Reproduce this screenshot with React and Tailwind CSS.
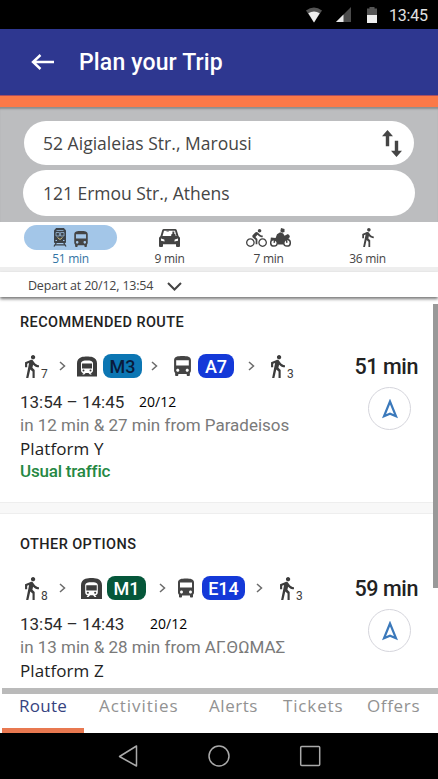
import React, { useState } from "react";
import { MdDirectionsBike, MdDirectionsBus, MdDirectionsWalk, MdSubway } from "react-icons/md";

const MODES = [
  { id: "transit", time: "51 min" },
  { id: "car", time: "9 min" },
  { id: "bike", time: "7 min" },
  { id: "walk", time: "36 min" },
];

const TABS = [
  { name: "Route", style: "ml-[19px] w-[80px] tracking-[0.25px]" },
  { name: "Activities", style: "w-[110px] tracking-[0.95px]" },
  { name: "Alerts", style: "w-[74px] tracking-[0.55px]" },
  { name: "Tickets", style: "w-[84px] tracking-[0.85px]" },
  { name: "Offers", style: "w-[60px] tracking-[0.65px]" },
];

const StatusBar = () => (
  <div className="flex h-[29px] shrink-0 items-center justify-end bg-black pr-[9px] text-[#e0e0e0]">
    <svg className="h-4 w-4" viewBox="0 0 16 16">
      <path d="M0 3.5Q8-2.5 16 3.5L8 15.5z" fill="#555" />
      <path d="M2.3 6.3Q8 2.6 13.7 6.3L8 15.5z" fill="#eee" />
    </svg>
    <svg className="ml-[14px] h-[15px] w-[15px]" viewBox="0 0 15 15">
      <path d="M15 0v15H0z" fill="#4b4b4b" />
      <path d="M7.5 7.5V15H0z" fill="#e8e8e8" />
    </svg>
    <svg className="ml-4 h-4 w-[10px]" viewBox="0 0 10 16">
      <path d="M2.5 0h5v1.5H10V16H0V1.5h2.5z" fill="#555" />
      <path d="M0 8h10v8H0z" fill="#eee" />
    </svg>
    <span className="ml-3 w-10 whitespace-nowrap pt-px text-[16px] leading-[29px] tracking-[-0.2px]">13:45</span>
  </div>
);

const TrainIcon = () => (
  <svg className="h-[19px] w-[14px] text-[#3c4248]" viewBox="0 0 14 19" fill="none" stroke="currentColor">
    <path d="M3 .5h8l1.500 2v12H1.500v-12z" fill="currentColor" />
    <path d="M3.500 2.500h7M3 4.500h3.400v3.500H3zM7.600 4.500H11v3.500H7.600z" stroke="#a3c6e8" strokeWidth=".7" />
    <path d="M4.500 9.500L7 11.500l2.500-2" stroke="#d7c481" />
    <path d="M2.500 12.500h1.500M10 12.500h1.500" stroke="#a3c6e8" />
    <path d="M3.400 14.500L1 18.500M10.600 14.500l2.400 4M2 16.800h10" strokeWidth="1.300" />
  </svg>
);

const CarIcon = () => (
  <svg className="h-[18px] w-[21px]" viewBox="0 0 21 18">
    <path
      d="M4.800 0h11.400q1.200 0 1.600 1.300L19.500 7 21 8.700V17q0 1-1 1h-2q-1 0-1-1v-1.700H4V17q0 1-1 1H1q-1 0-1-1V8.700L1.500 7l1.700-5.700Q3.600 0 4.800 0z"
      fill="currentColor"
    />
    <path d="M5 1.700h11L17.500 7h-14z" fill="#fff" />
    <path d="M12.200 7V5.400l1.200-.6V2.600h1.900v2.200l1.300.7V7zM7.500 1.700h2.300v.8H7.500z" fill="currentColor" />
    <path d="M2 9.500l3.300.9.300 2L2 11.700zM19 9.500l-3.300.9-.3 2 3.600-.7z" fill="#fff" />
  </svg>
);

const MotorbikeIcon = () => (
  <svg className="h-[19px] w-[21px]" viewBox="0 0 21 19" fill="none" stroke="currentColor">
    <circle cx="4" cy="14.800" r="3.300" strokeWidth="1.500" />
    <circle cx="17" cy="14.800" r="3.300" strokeWidth="1.500" />
    <path d="M11 0l3.500 1v3l-2.500.8-1.700-1.600z" fill="currentColor" stroke="none" />
    <path
      d="M10.200 4.300l3 1.200 1.300 2.300 3.500-1.700 1.900 2-.8 2.400-3.600 1.200-2 4.800H8.200L6 13l-5.500-1.300.4-2.200 4.700.6L7 6.200z"
      fill="currentColor"
      stroke="none"
    />
    <path d="M15.500 9.500L17 14.800M5 12l-1 2.800" strokeWidth="1.500" />
  </svg>
);

const SwapIcon = () => (
  <svg className="h-[27px] w-5" viewBox="0 0 20 27" fill="currentColor">
    <path d="M5.500 0L11 6.200H7.200v10H3.800v-10H0z" />
    <path d="M14.500 27L9 20.800h3.800v-10h3.400v10H20z" />
  </svg>
);

const ModeIcons = ({ id }) => {
  if (id === "transit") {
    return (
      <>
        <TrainIcon />
        <MdDirectionsBus viewBox="4 2 16 19" className="mt-0.5 ml-[7px] h-4 w-[14px]" />
      </>
    );
  }
  if (id === "car") return <CarIcon />;
  if (id === "bike") {
    return (
      <>
        <MdDirectionsBike viewBox="0 1.5 24 20.5" className="h-[18px] w-[21px]" />
        <span className="ml-[3px]">
          <MotorbikeIcon />
        </span>
      </>
    );
  }
  return <MdDirectionsWalk viewBox="6 1.5 13 21.5" className="h-[19px] w-3" />;
};

const Chevron = ({ className }) => (
  <svg className={`h-[10px] w-[7px] shrink-0 text-[#6b6b6b] ${className}`} viewBox="0 0 7 10" fill="none" stroke="currentColor" strokeWidth="1.5">
    <path d="M1 1l4.500 4L1 9" />
  </svg>
);

const Walk = ({ count, className }) => (
  <div className={`flex h-[23px] shrink-0 items-end text-[#3c3c3c] ${className}`}>
    <MdDirectionsWalk viewBox="6 1.5 13 21.5" className="h-[23px] w-[14px]" />
    <span className="ml-[2px] w-2 text-[12px] leading-[8px]">{count}</span>
  </div>
);

const RouteOption = ({ heading, steps, total, times, date, info, platform, traffic }) => (
  <section className="flex px-[20px]">
    <div className="w-[330px] shrink-0">
      <h2 className="h-5 whitespace-nowrap text-[14.5px] font-medium leading-5 tracking-[0.42px] text-[#222]">{heading}</h2>
      <div className="mt-[21px] flex h-6 items-center">{steps}</div>
      <div className="mt-3 flex h-6 items-center whitespace-nowrap leading-6">
        <span className="w-[104px] text-[17px] text-[#2b2b2b]">{times}</span>
        {date}
      </div>
      <p className="h-[23px] whitespace-nowrap text-[17px] leading-[23px] text-[#7a7a7a]">{info}</p>
      <p className="h-[23px] whitespace-nowrap font-['Open_Sans',sans-serif] text-[17px] leading-[23px] tracking-[0.1px] text-[#222]">
        {platform}
      </p>
      {traffic && <p className="h-[23px] text-[17px] font-medium leading-[23px] tracking-[-0.2px] text-[#258843]">{traffic}</p>}
    </div>
    <div className="flex flex-1 flex-col items-end pt-[41px]">
      <div className="h-6 whitespace-nowrap pt-px text-[21.5px] font-medium leading-6 tracking-[-0.4px] text-[#222]">{total}</div>
      <button className="mt-[9px] mr-[7px] flex h-[43px] w-[43px] items-center justify-center rounded-full border border-[#d5d5dc]">
        <svg className="h-5 w-4" viewBox="0 0 16 20" fill="none" stroke="#3b79bb" strokeWidth="2.2">
          <path d="M8 2.500L2 17.300l6-2.500 6 2.500z" />
        </svg>
      </button>
    </div>
  </section>
);

const App = () => {
  const [mode, setMode] = useState("transit");
  const [tab, setTab] = useState("Route");

  return (
    <div className="flex h-[779px] w-[438px] flex-col overflow-hidden bg-white font-['Roboto',sans-serif]">
      <StatusBar />

      <header className="flex h-[66px] shrink-0 items-center bg-[#2e3790] text-white">
        <svg className="ml-[31px] h-4 w-[23px]" viewBox="0 0 23 16" fill="none" stroke="currentColor" strokeWidth="2.4">
          <path d="M9.500 1L2 8l7.500 7M2 8h21" />
        </svg>
        <h1 className="mt-[2px] ml-[25px] whitespace-nowrap text-[23px] font-medium leading-8 tracking-[0.15px]">Plan your Trip</h1>
      </header>
      <div className="h-[12px] shrink-0 border-t border-[#a94e62] bg-[#fb7948]" />

      {/* origin and destination */}
      <div className="flex h-[115px] shrink-0 flex-col bg-[#bcbdbf] pl-[23px] font-['Open_Sans',sans-serif] text-[17.5px] text-[#454545] shadow-[inset_0_3px_2px_-1px_#8d8d8d]">
        <div className="mt-[14px] ml-px flex h-11 w-[390px] items-center justify-between rounded-full bg-white pr-3 pl-[19px]">
          <span className="tracking-[0.02px]">52 Aigialeias Str., Marousi</span>
          <SwapIcon />
        </div>
        <div className="mt-[5px] flex h-[46px] w-[392px] items-center rounded-full bg-white pl-5">
          <span className="tracking-[-0.02px]">121 Ermou Str., Athens</span>
        </div>
      </div>

      {/* travel modes */}
      <div className="flex h-[45px] shrink-0 pt-[3px] pl-[21px] font-['Open_Sans',sans-serif]">
        {MODES.map((m) => (
          <button key={m.id} onClick={() => setMode(m.id)} className="flex w-[99px] flex-col items-center text-[#444]">
            <span className={`flex h-[26px] w-[93px] items-center justify-center rounded-full ${mode === m.id ? "bg-[#a3c6e8]" : ""}`}>
              <ModeIcons id={m.id} />
            </span>
            <span className={`text-[12px] leading-[17px] tracking-[-0.3px] ${mode === m.id ? "text-[#3374a4]" : ""}`}>{m.time}</span>
          </button>
        ))}
      </div>
      <div className="h-[5px] shrink-0 bg-[#eeeeee]" />

      <div className="z-10 flex h-[25px] shrink-0 items-center bg-white pt-1 pl-7 font-['Open_Sans',sans-serif] text-[12.5px] text-[#444] shadow-[0_2px_3px_#777]">
        <span className="w-[126px] whitespace-nowrap tracking-[-0.2px]">Depart at 20/12, 13:54</span>
        <svg className="ml-[13px] h-[9px] w-[15px]" viewBox="0 0 15 9" fill="none" stroke="currentColor" strokeWidth="2">
          <path d="M1 1l6.500 6.500L14 1" />
        </svg>
      </div>

      {/* route list */}
      <main className="relative h-[391px] shrink-0 overflow-hidden pt-[16px]">
        <RouteOption
          heading="RECOMMENDED ROUTE"
          total="51 min"
          times="13:54 – 14:45"
          date={<span className="ml-[15px] font-['Open_Sans',sans-serif] text-[14px] text-black">20/12</span>}
          info="in 12 min & 27 min from Paradeisos"
          platform="Platform Y"
          traffic="Usual traffic"
          steps={
            <>
              <Walk count="7" className="ml-[5px]" />
              <Chevron className="ml-[10px]" />
              <MdSubway viewBox="2 2 20 20" className="ml-[11px] h-[21px] w-5 shrink-0 text-[#3d3d3d]" />
              <span className="ml-[6px] flex h-6 w-[39px] shrink-0 items-center justify-center rounded-lg bg-[#0c76b3] text-[18px] font-medium text-[#091b3c]">M3</span>
              <Chevron className="ml-[9px]" />
              <MdDirectionsBus viewBox="4 2 16 19" className="ml-[16px] h-5 w-[17px] shrink-0 text-[#444]" />
              <span className="ml-[7px] flex h-6 w-9 shrink-0 items-center justify-center rounded-lg bg-[#1439d8] text-[18px] font-medium text-white">A7</span>
              <Chevron className="ml-[14px]" />
              <Walk count="3" className="ml-[16px]" />
            </>
          }
        />
        <div className="mt-[19px] h-3 border-y border-[#eeeeee] bg-[#f8f8f8]" />
        <div className="pt-[21px]">
          <RouteOption
            heading="OTHER OPTIONS"
            total="59 min"
            times="13:54 – 14:43"
            date={<span className="ml-[26px] font-['Open_Sans',sans-serif] text-[14px] text-black">20/12</span>}
            info="in 13 min & 28 min from ΑΓ.ΘΩΜΑΣ"
            platform="Platform Z"
            steps={
              <>
                <Walk count="8" className="ml-[5px]" />
                <Chevron className="ml-[10px]" />
                <MdSubway viewBox="2 2 20 20" className="ml-[15px] h-[21px] w-[21px] shrink-0 text-[#3d3d3d]" />
                <span className="ml-[5px] flex h-6 w-[39px] shrink-0 items-center justify-center rounded-lg bg-[#05573a] text-[18px] font-medium text-white">M1</span>
                <Chevron className="ml-[13px]" />
                <MdDirectionsBus viewBox="4 2 16 19" className="ml-[12px] h-5 w-[16px] shrink-0 text-[#444]" />
                <span className="ml-[8px] flex h-6 w-[43px] shrink-0 items-center justify-center rounded-lg bg-[#1439d8] text-[18px] font-medium text-white">E14</span>
                <Chevron className="ml-[11px]" />
                <Walk count="3" className="ml-[17px]" />
              </>
            }
          />
        </div>
        <div className="absolute top-[7px] right-0 h-[284px] w-[5px] bg-[#999]" />
      </main>

      <nav className="flex h-[45px] shrink-0 flex-col font-['Open_Sans',sans-serif]">
        <div className="ml-[2px] h-[6px] bg-[#bababa]" />
        <div className="flex h-[34px] items-start">
          {TABS.map((t) => (
            <button
              key={t.name}
              onClick={() => setTab(t.name)}
              className={`whitespace-nowrap text-left text-[17px] leading-6 ${t.style} ${tab === t.name ? "text-[#36437f]" : "text-[#929292]"}`}
            >
              {t.name}
            </button>
          ))}
        </div>
        <div className="ml-[2px] h-[5px] w-[82px] bg-[#e87850]" />
      </nav>

      <footer className="flex h-[46px] shrink-0 items-center bg-black pl-[118px] text-[#aaa]">
        <svg className="h-6 w-5" viewBox="0 0 20 24" fill="none" stroke="currentColor" strokeWidth="1.5" strokeLinejoin="round">
          <path d="M18.500 2v20L1.500 12.500z" />
        </svg>
        <svg className="ml-[69px] h-6 w-6" viewBox="0 0 24 24" fill="none" stroke="currentColor" strokeWidth="1.5">
          <circle cx="12" cy="12" r="10" />
        </svg>
        <svg className="ml-[68px] h-6 w-6" viewBox="0 0 24 24" fill="none" stroke="currentColor" strokeWidth="1.5">
          <rect x="1.7" y="2.5" width="19" height="19" rx="1" />
        </svg>
      </footer>
    </div>
  );
};

export default App;
